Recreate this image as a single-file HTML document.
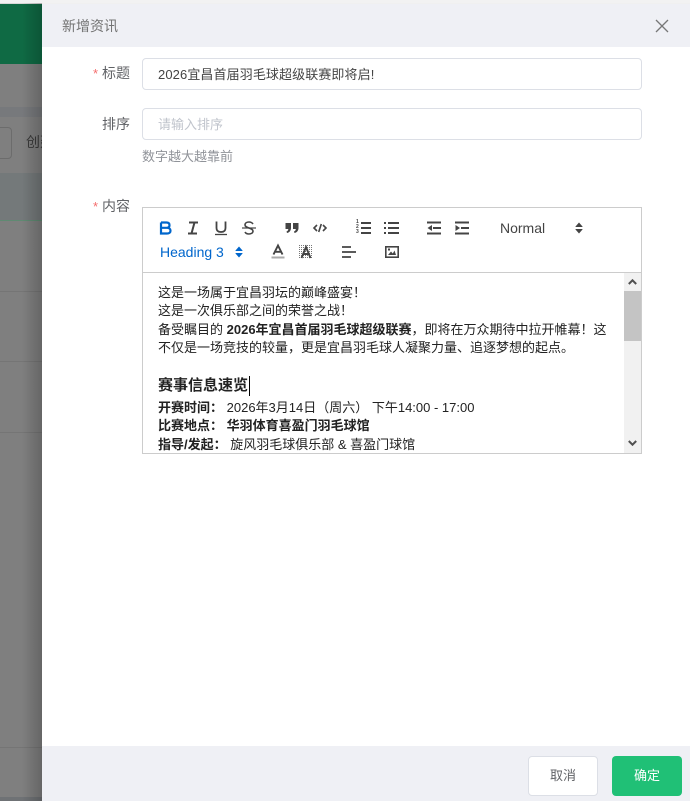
<!DOCTYPE html>
<html lang="zh">
<head>
<meta charset="utf-8">
<style>
html,body{margin:0;padding:0;width:690px;height:801px;overflow:hidden;background:#7f7f7f;font-family:"Liberation Sans","Noto Sans CJK SC",sans-serif;}
*{box-sizing:border-box}
.a{position:absolute}
.t{position:absolute;white-space:nowrap;line-height:20px;font-size:13px;color:#222}
b{font-weight:700}
svg{position:absolute;overflow:visible}
.l{position:absolute;right:560px;font-size:14px;line-height:20px;color:#606266;white-space:nowrap}
.l i{font-style:normal;color:#f56c6c;margin-right:4px;font-size:13px}
.inp{position:absolute;left:142px;width:500px;height:32px;border:1px solid #dcdfe6;border-radius:4px;background:#fff;font-size:13px;line-height:31px;padding-left:15px}
</style>
</head>
<body>
<!-- backdrop -->
<div class="a" style="left:0;top:0;width:42px;height:801px;background:#7f7f7f"></div>
<div class="a" style="left:0;top:0;width:690px;height:4px;background:#f0f0f0"></div>
<div class="a" style="left:0;top:3px;width:42px;height:1px;background:#d8d8d8"></div>
<div class="a" style="left:0;top:4px;width:42px;height:60px;background:#0f6a44"></div>
<div class="a" style="left:0;top:107px;width:42px;height:10px;background:#77797c"></div>
<div class="a" style="left:-20px;top:127px;width:32px;height:32px;border:1px solid #6c6c6c;border-radius:4px"></div>
<div class="t" style="left:26px;top:132px;font-size:14px;color:#3a3a3a;width:16px;overflow:hidden">创建</div>
<div class="a" style="left:0;top:173px;width:42px;height:47px;background:#74797a"></div>
<div class="a" style="left:0;top:220px;width:42px;height:1px;background:#5f8a72"></div>
<div class="a" style="left:0;top:291px;width:42px;height:1px;background:#757575"></div>
<div class="a" style="left:0;top:361px;width:42px;height:1px;background:#757575"></div>
<div class="a" style="left:0;top:432px;width:42px;height:1px;background:#757575"></div>
<div class="a" style="left:0;top:747px;width:42px;height:1px;background:#757575"></div>
<div class="a" style="left:0;top:797px;width:42px;height:4px;background:#6f7275"></div>
<div class="a" style="left:22px;top:0;width:20px;height:801px;background:linear-gradient(to right,rgba(0,0,0,0),rgba(0,0,0,.2))"></div>
<div class="a" style="left:0;top:0;width:690px;height:3px;background:#f2f2f2"></div>

<!-- panel -->
<div class="a" style="left:42px;top:4px;width:648px;height:797px;background:#fff"></div>
<div class="a" style="left:42px;top:4px;width:648px;height:43px;background:#eff0f5"></div>
<div class="t" style="left:62px;top:16px;font-size:14px;color:#737373">新增资讯</div>
<svg style="left:655px;top:19px" width="14" height="14" viewBox="0 0 14 14"><path d="M1 1L13 13M13 1L1 13" stroke="#777" stroke-width="1.3" fill="none"/></svg>

<div class="l" style="top:63px"><i>*</i>标题</div>
<div class="inp" style="top:58px;color:#444;letter-spacing:.1px">2026宜昌首届羽毛球超级联赛即将启!</div>
<div class="l" style="top:114px">排序</div>
<div class="inp" style="top:108px;color:#c0c4cc">请输入排序</div>
<div class="t" style="left:142px;top:147px;color:#909399">数字越大越靠前</div>
<div class="l" style="top:196px"><i>*</i>内容</div>

<!-- editor -->
<div class="a" style="left:142px;top:207px;width:500px;height:247px;border:1px solid #ccc;background:#fff"></div>
<div class="a" style="left:142px;top:272px;width:500px;height:1px;background:#ccc"></div>

<!-- toolbar row 1 -->
<svg style="left:158px;top:220px" width="16" height="16" viewBox="0 0 16 16"><path d="M3 2.500H8.500C10.500 2.500 11.500 3.600 11.500 5.200S10.500 7.800 8.500 7.800H3M3 7.800H9C11.200 7.800 12.500 9 12.500 10.700S11.200 13.500 9 13.500H3ZM3 2.500V13.500" stroke="#06c" stroke-width="2.200" fill="none"/></svg>
<svg style="left:186px;top:220px" width="14" height="16" viewBox="0 0 14 16"><path d="M3 2.500H12M2 13.500H11M8.500 2.500L5.500 13.500" stroke="#444" stroke-width="2" fill="none"/></svg>
<svg style="left:214px;top:220px" width="14" height="16" viewBox="0 0 14 16"><path d="M2.500 1.500V8C2.500 11 4.500 12 7 12S11.500 11 11.500 8V1.500" stroke="#444" stroke-width="1.800" fill="none"/><path d="M1 14.500H13" stroke="#444" stroke-width="1.300"/></svg>
<svg style="left:242px;top:220px" width="14" height="16" viewBox="0 0 14 16"><path d="M11 4C10 2.500 8.500 2 7 2C4.800 2 3 3 3 5C3 8 11 8 11 11C11 13 9 14 7 14C5.500 14 3.800 13.500 3 12" stroke="#444" stroke-width="1.600" fill="none"/><path d="M0 8H14" stroke="#444" stroke-width="1.200"/></svg>
<svg style="left:285px;top:222px" width="14" height="12" viewBox="0 0 14 12"><path d="M0.500 1H6V6C6 8.500 4.500 10.500 2 11L1.500 9.500C2.800 9 3.300 8 3.300 7H0.500ZM8 1H13.500V6C13.500 8.500 12 10.500 9.500 11L9 9.500C10.300 9 10.800 8 10.800 7H8Z" fill="#444"/></svg>
<svg style="left:313px;top:222px" width="14" height="12" viewBox="0 0 14 12"><path d="M4 3L1 6L4 9M10 3L13 6L10 9M8.300 2L5.700 10" stroke="#444" stroke-width="1.600" fill="none"/></svg>
<svg style="left:356px;top:221px" width="15" height="14" viewBox="0 0 15 14"><path d="M5 2H15M5 7H15M5 12H15" stroke="#444" stroke-width="1.900" fill="none"/></svg>
<div class="t" style="left:356px;top:220px;font-size:5px;line-height:5px;color:#444;font-weight:700">1<br>2<br>3</div>
<svg style="left:384px;top:221px" width="15" height="14" viewBox="0 0 15 14"><path d="M4 2H15M4 7H15M4 12H15" stroke="#444" stroke-width="1.900" fill="none"/><path d="M0 2H2M0 7H2M0 12H2" stroke="#444" stroke-width="1.900"/></svg>
<svg style="left:427px;top:221px" width="15" height="14" viewBox="0 0 15 14"><path d="M0 1.500H14M6 7H14M0 12.500H14" stroke="#444" stroke-width="2" fill="none"/><path d="M5 4V10L0.500 7Z" fill="#444"/></svg>
<svg style="left:455px;top:221px" width="15" height="14" viewBox="0 0 15 14"><path d="M0 1.500H14M6 7H14M0 12.500H14" stroke="#444" stroke-width="2" fill="none"/><path d="M0.500 4V10L5 7Z" fill="#444"/></svg>
<div class="t" style="left:500px;top:218px;font-size:14px;color:#444">Normal</div>
<svg style="left:575px;top:222px" width="8" height="12" viewBox="0 0 8 12"><path d="M4 0.500L7.500 4.500V5H0.500V4.500ZM4 11.500L0.500 7.500V7H7.500V7.500Z" fill="#444"/></svg>

<!-- toolbar row 2 -->
<div class="t" style="left:160px;top:242px;font-size:14px;color:#06c">Heading 3</div>
<svg style="left:235px;top:246px" width="8" height="12" viewBox="0 0 8 12"><path d="M4 0.500L7.500 4.500V5H0.500V4.500ZM4 11.500L0.500 7.500V7H7.500V7.500Z" fill="#06c"/></svg>
<svg style="left:271px;top:244px" width="14" height="15" viewBox="0 0 14 15"><path d="M2.500 10.500L7 1.500L11.500 10.500M4 7.800H10" stroke="#444" stroke-width="1.900" fill="none"/><path d="M0.500 13.500H13.500" stroke="#aaa" stroke-width="2"/></svg>
<svg style="left:299px;top:245px" width="14" height="14" viewBox="0 0 14 14"><defs><pattern id="p" width="2" height="2" patternUnits="userSpaceOnUse"><rect width="1" height="1" fill="#777"/></pattern></defs><rect width="14" height="14" fill="url(#p)"/><path d="M2.500 13L7 2L11.500 13M4 9H10" stroke="#444" stroke-width="1.900" fill="none"/></svg>
<svg style="left:342px;top:245px" width="14" height="14" viewBox="0 0 14 14"><path d="M0 2H9M0 7H14M0 12H9" stroke="#444" stroke-width="1.800" fill="none"/></svg>
<svg style="left:385px;top:245px" width="14" height="14" viewBox="0 0 14 14"><rect x="0.800" y="1.800" width="12.400" height="10.400" fill="none" stroke="#444" stroke-width="1.600"/><path d="M3 10L6 6.500L7.800 8.500L9.500 5.500L11 10Z" fill="#444"/><rect x="3" y="3.500" width="2" height="2" fill="#444"/></svg>

<!-- content -->
<div class="a" style="left:143px;top:273px;width:498px;height:180px;overflow:hidden">
<div class="t" style="left:15px;top:10px">这是一场属于宜昌羽坛的巅峰盛宴！</div>
<div class="t" style="left:15px;top:28px">这是一次俱乐部之间的荣誉之战！</div>
<div class="t" style="left:15px;top:47px">备受瞩目的 <b>2026年宜昌首届羽毛球超级联赛</b>，即将在万众期待中拉开帷幕！这</div>
<div class="t" style="left:15px;top:65px">不仅是一场竞技的较量，更是宜昌羽毛球人凝聚力量、追逐梦想的起点。</div>
<div class="t" style="left:15px;top:103px;font-size:15px;font-weight:700">赛事信息速览</div>
<div class="a" style="left:106px;top:103px;width:1px;height:20px;background:#000"></div>
<div class="t" style="left:15px;top:125px"><b>开赛时间：</b> 2026年3月14日（周六） 下午14:00 - 17:00</div>
<div class="t" style="left:15px;top:143px"><b>比赛地点：</b> <b>华羽体育喜盈门羽毛球馆</b></div>
<div class="t" style="left:15px;top:162px"><b>指导/发起：</b> 旋风羽毛球俱乐部 &amp; 喜盈门球馆</div>
</div>

<!-- scrollbar -->
<div class="a" style="left:624px;top:273px;width:17px;height:180px;background:#f1f1f1"></div>
<div class="a" style="left:624px;top:291px;width:17px;height:50px;background:#c4c4c4"></div>
<svg style="left:628px;top:279px" width="9" height="6" viewBox="0 0 9 6"><path d="M0.800 5L4.500 1.300L8.200 5" stroke="#505050" stroke-width="2" fill="none"/></svg>
<svg style="left:628px;top:440px" width="9" height="6" viewBox="0 0 9 6"><path d="M0.800 1L4.500 4.700L8.200 1" stroke="#505050" stroke-width="2" fill="none"/></svg>

<!-- footer -->
<div class="a" style="left:42px;top:746px;width:648px;height:55px;background:#eff0f5"></div>
<div class="a" style="left:528px;top:756px;width:70px;height:40px;background:#fff;border:1px solid #dcdfe6;border-radius:4px;font-size:13px;line-height:38px;text-align:center;color:#606266">取消</div>
<div class="a" style="left:612px;top:756px;width:70px;height:40px;background:#20c076;border-radius:4px;font-size:13px;line-height:40px;text-align:center;color:#fff">确定</div>
</body>
</html>
